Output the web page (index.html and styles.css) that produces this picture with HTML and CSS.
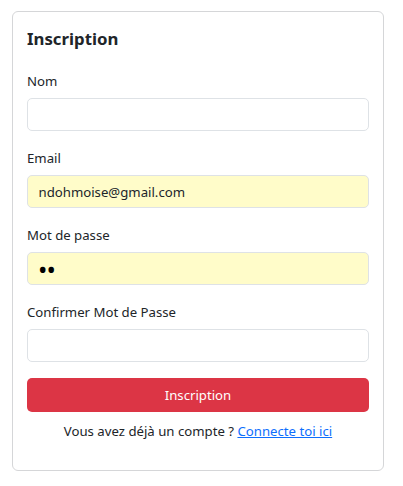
FILE: index.html
```html
<!DOCTYPE html>
<html lang="fr">
<head>
<meta charset="utf-8">
<title>Inscription</title>
<link rel="stylesheet" href="styles.css">
</head>
<body>
<div class="page">
  <form class="card">
    <h5 class="card-title">Inscription</h5>
    <div class="field">
      <label class="label" for="nom">Nom</label>
      <input class="input" id="nom" type="text">
    </div>
    <div class="field">
      <label class="label" for="email">Email</label>
      <input class="input input-filled" id="email" type="email" value="ndohmoise@gmail.com">
    </div>
    <div class="field">
      <label class="label" for="pass">Mot de passe</label>
      <input class="input input-filled input-secret" id="pass" type="password" value="ab">
    </div>
    <div class="field">
      <label class="label" for="pass2">Confirmer Mot de Passe</label>
      <input class="input input-secret" id="pass2" type="password">
    </div>
    <button class="btn" type="button">Inscription</button>
    <p class="footer-text">Vous avez déjà un compte ? <a class="link" href="#">Connecte toi ici</a></p>
  </form>
</div>
</body>
</html>
```
FILE: styles.css
```css
* { box-sizing: border-box; }
html, body { margin: 0; padding: 0; background: #fff; }
body {
  font-family: "Noto Sans", "Open Sans", sans-serif;
  font-size: 13.2px;
  line-height: 21px;
  color: #212529;
}
.page {
  padding: 11px 0 0 12px;
}
.card {
  width: 372px;
  border: 1px solid #d5d6d8;
  border-radius: 6px;
  padding: 14px 14px 14px;
  display: flex;
  flex-direction: column;
}
.card-title {
  margin: 2px 0 21px;
  font-size: 16.8px;
  line-height: 21px;
  font-weight: 700;
  color: #212529;
}
.field {
  display: flex;
  flex-direction: column;
  margin-bottom: 16px;
}
.label {
  display: block;
  line-height: 21px;
  padding-top: 1px;
  margin-bottom: 6px;
}
.field + .field .label {
  padding-top: 1px;
}
.input {
  display: block;
  width: 100%;
  height: 33px;
  padding: 1px 10.5px 0;
  font-family: inherit;
  font-size: 13.2px;
  color: #212529;
  background: #fff;
  border: 1px solid #dee2e6;
  border-radius: 5px;
  outline: none;
}
.input-secret {
  font-size: 25px;
  color: #000;
  padding-left: 10px;
  padding-top: 0;
  letter-spacing: -1px;
}
.input-filled {
  background: #fffcc9;
}
.btn {
  height: 34px;
  width: 100%;
  border: 0;
  border-radius: 5px;
  background: #dc3545;
  color: #fff;
  font-family: inherit;
  font-size: 13.2px;
  cursor: pointer;
  padding-top: 1px;
}
.footer-text {
  margin: 9px 0 14px;
  text-align: center;
  line-height: 21px;
}
.link {
  color: #0d6efd;
  text-decoration: underline;
}
```
